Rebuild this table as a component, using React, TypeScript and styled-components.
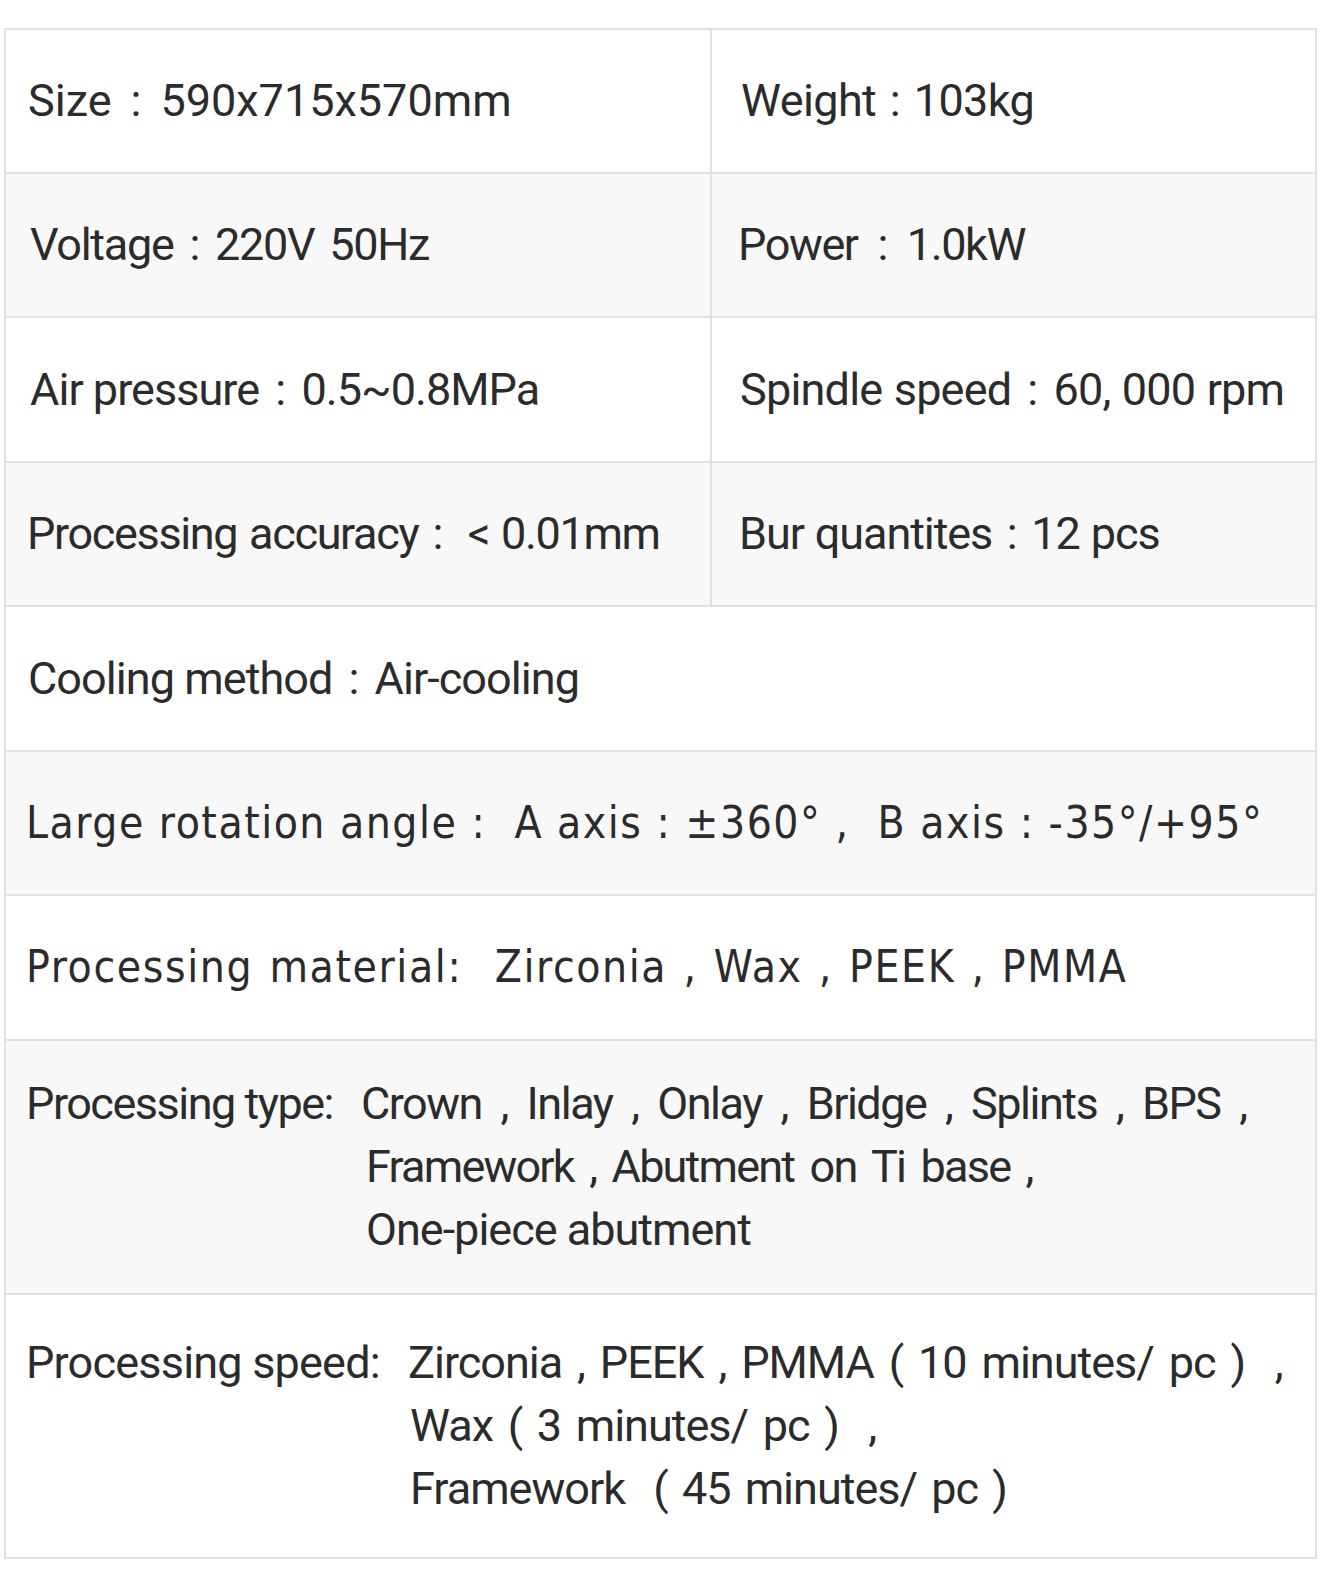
import React from "react";
import styled, { createGlobalStyle } from "styled-components";

const Global = createGlobalStyle`
  html, body { margin: 0; padding: 0; background: #fff; }
  body { font-family: Roboto, "Noto Sans CJK KR", sans-serif; color: #2b2b2b; }
`;

const LINE = "#e1e1e1";

const Table = styled.div`
  box-sizing: border-box;
  width: 1313px;
  margin: 28px 0 0 4px;
  border: 2px solid ${LINE};
  border-bottom: none;
  display: flex;
  flex-direction: column;
`;

const Row = styled.div<{ $shade?: boolean; $h: number }>`
  box-sizing: border-box;
  height: ${(p) => p.$h}px;
  background: ${(p) => (p.$shade ? "#f8f8f8" : "#ffffff")};
  border-bottom: 2px solid ${LINE};
  display: flex;
`;

const Cell = styled.div<{ $w?: number; $pl: number; $divider?: boolean }>`
  box-sizing: border-box;
  ${(p) => (p.$w ? `width: ${p.$w}px; flex: none;` : `flex: 1;`)}
  padding-left: ${(p) => p.$pl}px;
  display: flex;
  align-items: center;
  border-right: ${(p) => (p.$divider ? `2px solid ${LINE}` : "none")};
`;

const Text = styled.span<{ $dv?: boolean; $ls?: number; $ws?: number; $size?: number }>`
  display: inline-block;
  white-space: pre;
  font-family: ${(p) =>
    p.$dv ? `"DejaVu Sans Condensed", "DejaVu Sans", sans-serif` : `Roboto, "Noto Sans CJK KR", sans-serif`};
  font-stretch: ${(p) => (p.$dv ? "condensed" : "normal")};
  font-size: ${(p) => p.$size ?? 45}px;
  line-height: 1;
  letter-spacing: ${(p) => p.$ls ?? 0}px;
  word-spacing: ${(p) => p.$ws ?? 0}px;
`;

const Colon = styled.span<{ $gap: number }>`
  display: inline-block;
  margin: 0 ${(p) => p.$gap}px;
`;

const Multi = styled.div`
  display: flex;
  align-items: flex-start;
`;

const Label = styled.div<{ $w: number }>`
  width: ${(p) => p.$w}px;
  flex: none;
  height: 63px;
  display: flex;
  align-items: center;
`;

const Lines = styled.div`
  display: flex;
  flex-direction: column;
`;

const Line = styled.div<{ $indent?: number }>`
  height: 63px;
  display: flex;
  align-items: center;
  padding-left: ${(p) => p.$indent ?? 0}px;
`;

type SpecProps = { label: string; value: string; gap: number; ls: number; ws?: number };

function Spec({ label, value, gap, ls, ws = 0 }: SpecProps) {
  return (
    <Text $ls={ls} $ws={ws}>
      {label}
      <Colon $gap={gap}>:</Colon>
      {value}
    </Text>
  );
}

export default function App() {
  return (
    <>
      <Global />
      <Table>
        <Row $h={143.5}>
          <Cell $w={706} $pl={22} $divider>
            <Spec label="Size" value="590x715x570mm" gap={19} ls={0} />
          </Cell>
          <Cell $pl={29}>
            <Spec label="Weight" value="103kg" gap={13.6} ls={-0.6} />
          </Cell>
        </Row>
        <Row $h={144.5} $shade>
          <Cell $w={706} $pl={24} $divider>
            <Spec label="Voltage" value="220V 50Hz" gap={16} ls={-1.3} ws={5} />
          </Cell>
          <Cell $pl={26}>
            <Spec label="Power" value="1.0kW" gap={19.8} ls={-1.4} />
          </Cell>
        </Row>
        <Row $h={144.5}>
          <Cell $w={706} $pl={24} $divider>
            <Spec label="Air pressure" value="0.5~0.8MPa" gap={16.2} ls={-0.96} />
          </Cell>
          <Cell $pl={28}>
            <Spec label="Spindle speed" value="60, 000 rpm" gap={16} ls={-0.8} ws={1} />
          </Cell>
        </Row>
        <Row $h={144.5} $shade>
          <Cell $w={706} $pl={21} $divider>
            <Spec label="Processing accuracy" value=" < 0.01mm" gap={14} ls={-1.35} ws={2} />
          </Cell>
          <Cell $pl={27}>
            <Spec label="Bur quantites" value="12 pcs" gap={14.7} ls={-1.1} ws={1} />
          </Cell>
        </Row>
        <Row $h={144.5}>
          <Cell $pl={22}>
            <Spec label="Cooling method" value="Air-cooling" gap={16} ls={-0.94} />
          </Cell>
        </Row>
        <Row $h={144.5} $shade>
          <Cell $pl={20}>
            <Text $dv $size={44} $ls={1.5}>
              Large rotation angle :  A axis : ±360° ,  B axis : -35°/+95°
            </Text>
          </Cell>
        </Row>
        <Row $h={144.5}>
          <Cell $pl={20}>
            <Text $dv $size={44} $ls={1.6} $ws={2}>
              Processing material:  Zirconia , Wax , PEEK , PMMA
            </Text>
          </Cell>
        </Row>
        <Row $h={254.5} $shade>
          <Cell $pl={20}>
            <Multi>
              <Label $w={335}>
                <Text $ls={-1.5}>Processing type:</Text>
              </Label>
              <Lines>
                <Line>
                  <Text $ls={-1.5} $ws={9}>Crown , Inlay , Onlay , Bridge , Splints , BPS ,</Text>
                </Line>
                <Line $indent={5}>
                  <Text $ls={-1.8} $ws={6}>Framework , Abutment on Ti base ,</Text>
                </Line>
                <Line $indent={5}>
                  <Text $ls={-1}>One-piece abutment</Text>
                </Line>
              </Lines>
            </Multi>
          </Cell>
        </Row>
        <Row $h={263.5}>
          <Cell $pl={20}>
            <Multi>
              <Label $w={382}>
                <Text $ls={-0.8}>Processing speed:</Text>
              </Label>
              <Lines>
                <Line>
                  <Text $ls={-1} $ws={4.7}>Zirconia , PEEK , PMMA ( 10 minutes/ pc )  ,</Text>
                </Line>
                <Line $indent={2}>
                  <Text $ls={-1} $ws={4.5}>Wax ( 3 minutes/ pc )  ,</Text>
                </Line>
                <Line $indent={2}>
                  <Text $ls={-1} $ws={4}>Framework  ( 45 minutes/ pc )</Text>
                </Line>
              </Lines>
            </Multi>
          </Cell>
        </Row>
      </Table>
    </>
  );
}
